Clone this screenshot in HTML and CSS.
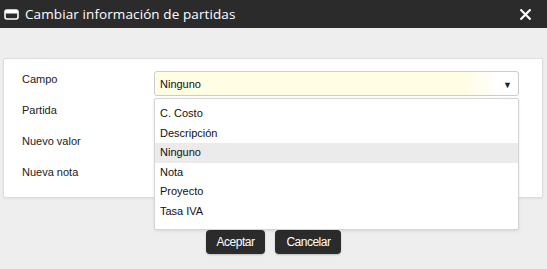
FILE: index.html
```html
<!DOCTYPE html>
<html lang="es">
<head>
    <meta charset="UTF-8">
    <title>Cambiar información de partidas</title>
    <link rel="stylesheet" href="styles.css">
</head>
<body>
    <div class="titlebar">
        <svg class="win-icon" width="15" height="11" viewBox="0 0 15 11">
            <rect x="1" y="1" width="13" height="9" rx="2" fill="none" stroke="#fff" stroke-width="1.6"/>
            <rect x="1" y="1" width="13" height="3.5" rx="1.5" fill="#fff"/>
        </svg>
        <span class="title">Cambiar información de partidas</span>
        <svg class="close" width="11" height="11" viewBox="0 0 11 11">
            <path d="M1.2 1.2 L9.8 9.8 M9.8 1.2 L1.2 9.8" stroke="#fff" stroke-width="2.2" stroke-linecap="square"/>
        </svg>
    </div>

    <div class="card">
        <div class="form">
            <div class="label">Campo</div>
            <div class="field">
                <div class="select">
                    <span>Ninguno</span>
                    <span class="caret">&#9660;</span>
                </div>
                <ul class="options">
                    <li>C. Costo</li>
                    <li>Descripción</li>
                    <li class="active">Ninguno</li>
                    <li>Nota</li>
                    <li>Proyecto</li>
                    <li>Tasa IVA</li>
                </ul>
            </div>
            <div class="label">Partida</div>
            <div class="field"></div>
            <div class="label">Nuevo valor</div>
            <div class="field"></div>
            <div class="label">Nueva nota</div>
            <div class="field"></div>
        </div>
    </div>

    <div class="buttons">
        <button class="btn">Aceptar</button>
        <button class="btn">Cancelar</button>
    </div>
</body>
</html>
```

FILE: styles.css
```css
body {
    margin: 0;
    background: #eeeeee;
    font-family: 'Liberation Sans', Arial, sans-serif;
    width: 547px;
    height: 269px;
    overflow: hidden;
}

.titlebar {
    height: 28px;
    background: #2b2b2b;
    display: flex;
    align-items: center;
    padding: 0 16px 0 4px;
    color: #fff;
}

.win-icon {
    margin-right: 6px;
}

.title {
    font-family: 'Open Sans', sans-serif;
    font-size: 13.5px;
    letter-spacing: 0.1px;
    flex: 1;
}

.close {
    margin-top: 1px;
}

.card {
    margin: 30px 4px 0 3px;
    background: #fff;
    border: 1px solid #dddddd;
    border-radius: 2px;
    box-shadow: 0 1px 2px rgba(0, 0, 0, 0.06);
    padding: 12px 0 2px 18px;
}

.form {
    display: grid;
    grid-template-columns: 132px 365px;
    grid-auto-rows: 31px;
}

.label {
    font-size: 11px;
    color: #222;
    padding-top: 1px;
    line-height: 14px;
}

.field {
    position: relative;
}

.select {
    height: 23px;
    border: 1px solid #cccccc;
    border-radius: 3px;
    background: linear-gradient(to right, #fffde3 85%, #ffffff 95%);
    display: flex;
    align-items: center;
    justify-content: space-between;
    padding: 0 6px 0 5px;
    font-size: 11px;
    color: #111;
}

.caret {
    font-size: 9px;
    color: #222;
    margin-top: 2px;
}

.options {
    position: absolute;
    top: 27px;
    left: 0;
    width: 363px;
    margin: 0;
    padding: 5px 0 8px;
    list-style: none;
    background: #fff;
    border: 1px solid #d4d4d4;
    border-radius: 2px;
    box-shadow: 0 1px 3px rgba(0, 0, 0, 0.1);
    z-index: 2;
}

.options li {
    height: 19.5px;
    line-height: 19.5px;
    padding-left: 5px;
    font-size: 11px;
    color: #111;
}

.options li.active {
    background: #ebebeb;
}

.buttons {
    display: flex;
    justify-content: center;
    gap: 10px;
    margin-top: 32px;
}

.btn {
    height: 24px;
    border: none;
    border-radius: 4px;
    background: #2b2b2b;
    color: #fff;
    font-family: 'Liberation Sans', sans-serif;
    font-size: 12px;
    letter-spacing: -0.5px;
    padding: 0 11px 0 11px;
    box-shadow: 0 1px 2px rgba(0, 0, 0, 0.2);
}
```
